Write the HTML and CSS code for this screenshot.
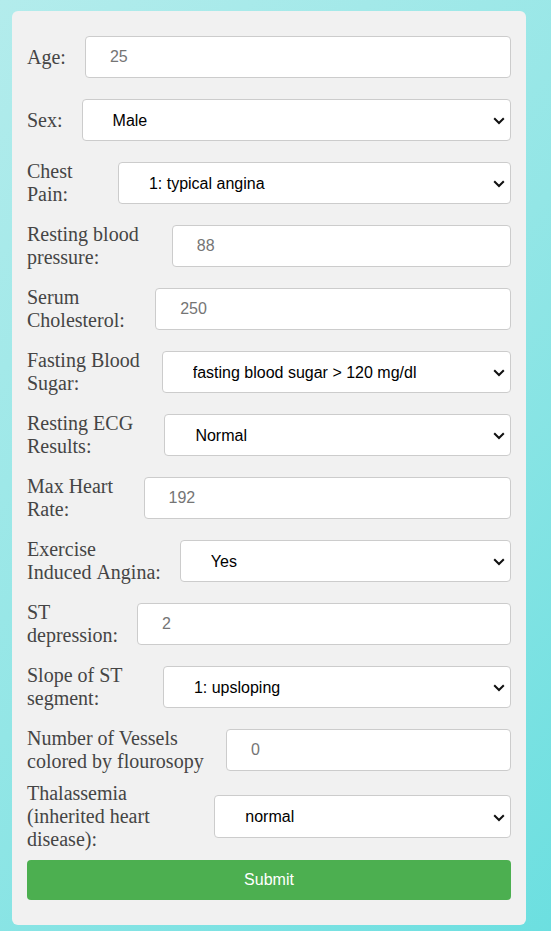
FILE: index.html
```html
<!DOCTYPE html>
<html lang="en">
<head>
<meta charset="utf-8">
<title>Heart Disease Prediction</title>
<link rel="stylesheet" href="styles.css">
</head>
<body>
<div class="card">
  <form class="form">
    <div class="row">
      <label class="label" for="age">Age:</label>
      <input class="field" id="age" type="text" placeholder="25">
    </div>
    <div class="row">
      <label class="label" for="sex">Sex:</label>
      <select class="field select" id="sex"><option>Male</option><option>Female</option></select>
      <svg class="chev" viewBox="0 0 12 8" width="12" height="8"><path d="M1.2 1.2 L6 6 L10.8 1.2" fill="none" stroke="#111" stroke-width="2"/></svg>
    </div>
    <div class="row">
      <label class="label" for="cp">Chest Pain:</label>
      <select class="field select" id="cp"><option>1: typical angina</option><option>2: atypical angina</option><option>3: non-anginal pain</option><option>4: asymptomatic</option></select>
      <svg class="chev" viewBox="0 0 12 8" width="12" height="8"><path d="M1.2 1.2 L6 6 L10.8 1.2" fill="none" stroke="#111" stroke-width="2"/></svg>
    </div>
    <div class="row">
      <label class="label" for="bp">Resting blood pressure:</label>
      <input class="field" id="bp" type="text" placeholder="88">
    </div>
    <div class="row">
      <label class="label" for="chol">Serum Cholesterol:</label>
      <input class="field" id="chol" type="text" placeholder="250">
    </div>
    <div class="row">
      <label class="label" for="fbs">Fasting Blood Sugar:</label>
      <select class="field select" id="fbs"><option>fasting blood sugar &gt; 120 mg/dl</option><option>fasting blood sugar &lt;= 120 mg/dl</option></select>
      <svg class="chev" viewBox="0 0 12 8" width="12" height="8"><path d="M1.2 1.2 L6 6 L10.8 1.2" fill="none" stroke="#111" stroke-width="2"/></svg>
    </div>
    <div class="row">
      <label class="label" for="ecg">Resting ECG Results:</label>
      <select class="field select" id="ecg"><option>Normal</option><option>ST-T wave abnormality</option><option>Left ventricular hypertrophy</option></select>
      <svg class="chev" viewBox="0 0 12 8" width="12" height="8"><path d="M1.2 1.2 L6 6 L10.8 1.2" fill="none" stroke="#111" stroke-width="2"/></svg>
    </div>
    <div class="row">
      <label class="label" for="hr">Max Heart Rate:</label>
      <input class="field" id="hr" type="text" placeholder="192">
    </div>
    <div class="row">
      <label class="label" for="exang">Exercise Induced&nbsp;Angina:</label>
      <select class="field select" id="exang"><option>Yes</option><option>No</option></select>
      <svg class="chev" viewBox="0 0 12 8" width="12" height="8"><path d="M1.2 1.2 L6 6 L10.8 1.2" fill="none" stroke="#111" stroke-width="2"/></svg>
    </div>
    <div class="row">
      <label class="label" for="st">ST depression:</label>
      <input class="field" id="st" type="text" placeholder="2">
    </div>
    <div class="row">
      <label class="label" for="slope">Slope of ST segment:</label>
      <select class="field select" id="slope"><option>1: upsloping</option><option>2: flat</option><option>3: downsloping</option></select>
      <svg class="chev" viewBox="0 0 12 8" width="12" height="8"><path d="M1.2 1.2 L6 6 L10.8 1.2" fill="none" stroke="#111" stroke-width="2"/></svg>
    </div>
    <div class="row">
      <label class="label" for="ca">Number of Vessels colored by flourosopy</label>
      <input class="field" id="ca" type="text" placeholder="0">
    </div>
    <div class="row row-tall">
      <label class="label" for="thal">Thalassemia (inherited heart disease):</label>
      <select class="field select" id="thal"><option>normal</option><option>fixed defect</option><option>reversable defect</option></select>
      <svg class="chev" viewBox="0 0 12 8" width="12" height="8"><path d="M1.2 1.2 L6 6 L10.8 1.2" fill="none" stroke="#111" stroke-width="2"/></svg>
    </div>
    <button class="submit" type="submit">Submit</button>
  </form>
</div>
</body>
</html>
```
FILE: styles.css
```css
html, body {
  margin: 0;
  padding: 0;
  min-height: 100%;
}

body {
  min-height: 931px;
  background: linear-gradient(135deg, #b3ecec 0%, #93e6e6 50%, #6cdfe0 100%);
  font-family: "Liberation Serif", "Times New Roman", serif;
  overflow: hidden;
}

.card {
  box-sizing: border-box;
  width: 514px;
  margin: 11px 0 0 12px;
  padding: 23px 15px 25px 15px;
  background: #f1f1f1;
  border-radius: 6px;
}

.form {
  display: flex;
  flex-direction: column;
  gap: 17px;
}

.row {
  position: relative;
  display: flex;
  align-items: center;
  height: 46px;
}

.row-tall {
  height: 53px;
}

.label {
  font-family: "Liberation Serif", "Times New Roman", serif;
  font-size: 20px;
  line-height: 23px;
  color: #454545;
  margin-right: 19px;
}

.field {
  box-sizing: border-box;
  width: 100%;
  min-width: 0;
  padding: 11px 24px;
  border: 1px solid #cccccc;
  border-radius: 4px;
  background: #ffffff;
  font-family: "Liberation Sans", Arial, sans-serif;
  font-size: 16px;
  line-height: normal;
  color: #111111;
  outline: none;
}

.field::placeholder {
  color: #757575;
}

.select {
  -webkit-appearance: none;
  appearance: none;
  padding: 11px 30px;
  height: 42.5px;
  color: #000000;
}

.chev {
  position: absolute;
  right: 6px;
  top: 50%;
  margin-top: -3px;
  width: 12px;
  height: 8px;
  pointer-events: none;
}

.submit {
  display: block;
  width: 100%;
  height: 40px;
  border: none;
  border-radius: 4px;
  background: #4caf50;
  color: #ffffff;
  font-family: "Liberation Sans", Arial, sans-serif;
  font-size: 16px;
  cursor: pointer;
}
```
